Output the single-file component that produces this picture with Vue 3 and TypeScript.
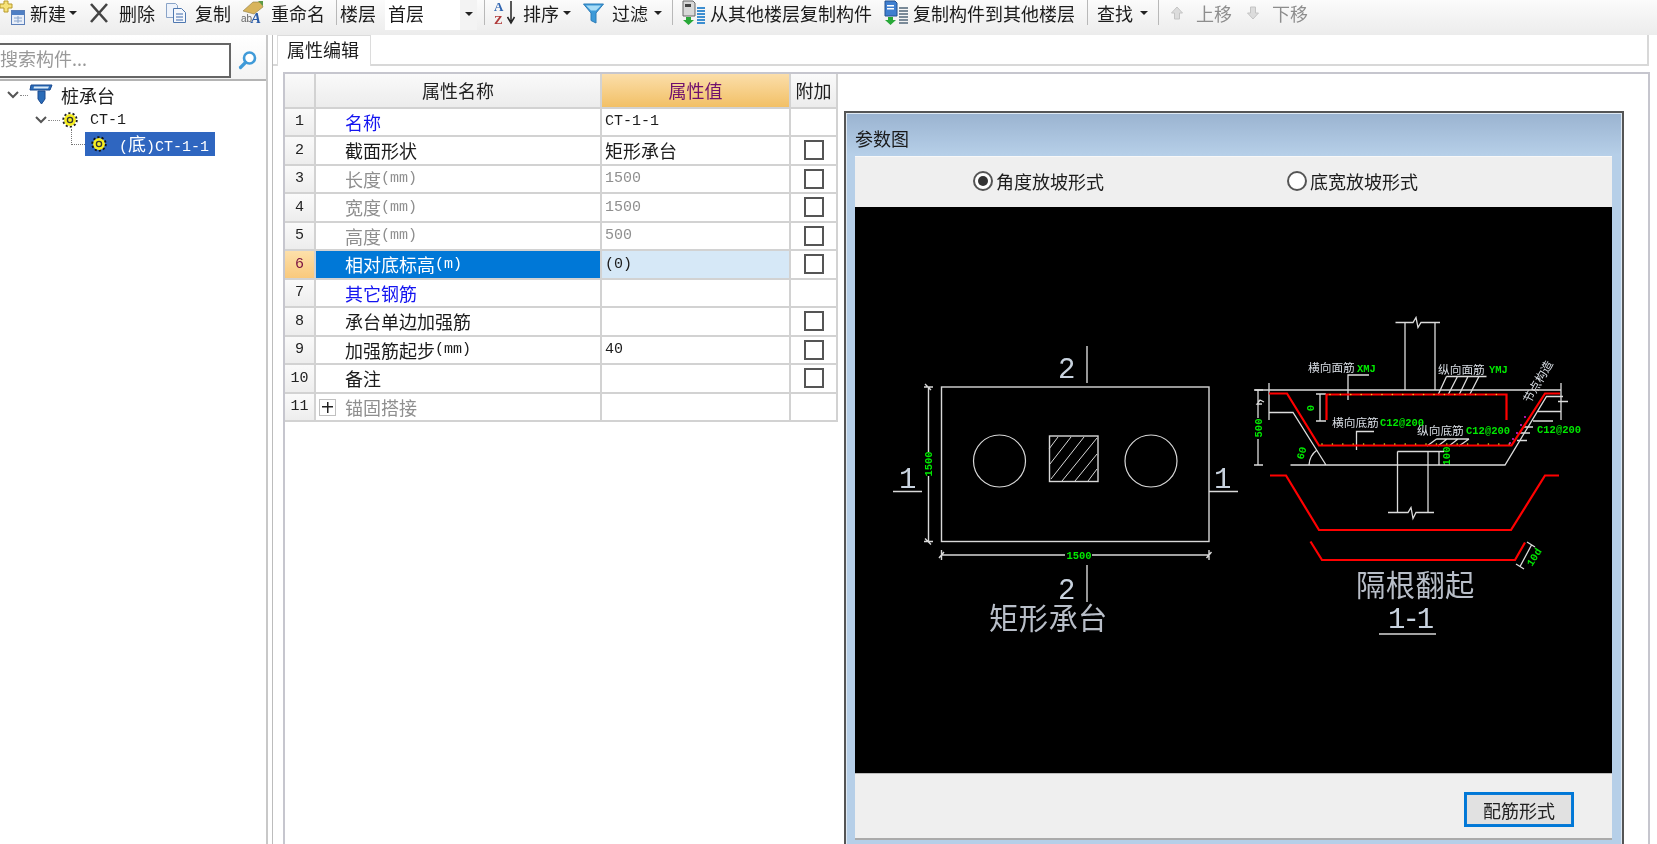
<script setup lang="ts">
interface Row {
  no: number
  name: string
  unit?: string
  value?: string
  mono?: boolean
  kind?: 'link' | 'muted' | 'active'
  check?: boolean
  expand?: boolean
}
const rows: Row[] = [
  { no: 1, name: '名称', value: 'CT-1-1', mono: true, kind: 'link' },
  { no: 2, name: '截面形状', value: '矩形承台', check: true },
  { no: 3, name: '长度', unit: '(mm)', value: '1500', mono: true, kind: 'muted', check: true },
  { no: 4, name: '宽度', unit: '(mm)', value: '1500', mono: true, kind: 'muted', check: true },
  { no: 5, name: '高度', unit: '(mm)', value: '500', mono: true, kind: 'muted', check: true },
  { no: 6, name: '相对底标高', unit: '(m)', value: '(0)', mono: true, kind: 'active', check: true },
  { no: 7, name: '其它钢筋', kind: 'link' },
  { no: 8, name: '承台单边加强筋', check: true },
  { no: 9, name: '加强筋起步', unit: '(mm)', value: '40', mono: true, check: true },
  { no: 10, name: '备注', check: true },
  { no: 11, name: '锚固搭接', kind: 'muted', expand: true },
]
const range = (from: number, to: number, step: number) => {
  const out: number[] = []
  for (let v = from; v <= to; v += step) out.push(v)
  return out
}
const topDots = range(1330, 1500, 10.4)
const bottomDots = range(1322, 1510, 10.4)
const hatch = [
  'M1049 449 L1058 437', 'M1050 464 L1071 437', 'M1051 479 L1084 437', 'M1062 481 L1097 438',
  'M1075 481 L1097 454', 'M1088 481 L1097 469',
]
const magenta = [[1525, 417], [1521, 425], [1517, 433], [1513, 439], [1510, 443]]
</script>

<template>
  <div class="app">
    <header class="toolbar">
      <div class="tool t-new">
        <svg width="25" height="26" viewBox="0 0 25 26"><path d="M4 1h4v3h4v4H8v4H4V8H0V4h4z" fill="#f6e27a" stroke="#b89a2a" /><rect x="11.5" y="10.5" width="13" height="14" fill="#e8eef8" stroke="#5b7fb8" /><rect x="12" y="11" width="12" height="4" fill="#4f7fc4" /><path d="M14 18h8M14 21h8M18 16v7" stroke="#88a4cc" /></svg>
        <span>新建</span><i class="caret" />
      </div>
      <div class="tool t-del">
        <svg width="18" height="22" viewBox="0 0 18 22"><path d="M1 2l16 18M17 2L1 20" stroke="#444" stroke-width="2.6" /></svg>
        <span>删除</span>
      </div>
      <div class="tool t-copy">
        <svg width="22" height="22" viewBox="0 0 22 22"><path d="M1.5 1.5h9l2 2v12h-11z" fill="#eef3fb" stroke="#8aa4c8" /><path d="M8.5 6.5h8l4 4v10h-12z" fill="#f4f7fc" stroke="#4f78b0" /><path d="M11 12h7M11 15h7M11 18h7" stroke="#3f6bac" /></svg>
        <span>复制</span>
      </div>
      <div class="tool t-ren">
        <svg width="23" height="26" viewBox="0 0 23 26"><path d="M2 11L12 2h8l2 5-9 7z" fill="#d8b45c" stroke="#8f7a40" stroke-width=".6" /><path d="M17 1h5v5z" fill="#5c9a46" /><text x="0" y="22" class="ico-ab">ab</text><text x="10" y="23" class="ico-a">A</text></svg>
        <span>重命名</span>
      </div>
      <i class="sep" />
      <span class="floor-label">楼层</span>
      <div class="combo"><span>首层</span><b class="combo-arrow"><i class="caret" /></b></div>
      <i class="sep s-combo" />
      <div class="tool t-sort">
        <svg width="23" height="26" viewBox="0 0 23 26"><text x="0" y="11" class="ico-az az-a">A</text><text x="0" y="24" class="ico-az az-z">Z</text><path d="M17 1v20M13.5 17l3.5 6 3.500-6" fill="none" stroke="#222" stroke-width="1.500" /></svg>
        <span>排序</span><i class="caret" />
      </div>
      <div class="tool t-filter">
        <svg width="21" height="22" viewBox="0 0 21 22"><path d="M.5 2h20l-7.500 9v10l-5-2.500V11z" fill="#3d9ad8" stroke="#2d7cb8" /><path d="M3 3.500h15l-5 5H8z" fill="#a8dcf6" /></svg>
        <span>过滤</span><i class="caret" />
      </div>
      <i class="sep" />
      <div class="tool t-from">
        <svg width="24" height="26" viewBox="0 0 24 26"><path d="M1 1h10l2 2v13H1z" fill="#d8d8d8" stroke="#666" /><path d="M3 4h6v3H3z" fill="#444" /><path d="M4 17h5v3h3l-5.500 5L1 20h3z" fill="#28a838" /><path d="M15 8h8M15 11h8M15 14h8M15 17h8M15 20h8M15 23h8" stroke="#3d8ed0" stroke-width="1.800" /></svg>
        <span>从其他楼层复制构件</span>
      </div>
      <div class="tool t-to">
        <svg width="25" height="26" viewBox="0 0 25 26"><path d="M1 1h10l2 2v13H1z" fill="#3f7fd0" stroke="#23508f" /><path d="M3 5h7v1.500H3zM3 8h7v1.500H3z" fill="#fff" /><path d="M4 17h5v3h3l-5.500 5L1 20h3z" fill="#28a838" /><path d="M15 8h9M15 11h9M15 14h9M15 17h9M15 20h9M15 23h9" stroke="#7a8a98" stroke-width="1.800" /></svg>
        <span>复制构件到其他楼层</span>
      </div>
      <i class="sep" />
      <div class="tool t-find"><span>查找</span><i class="caret" /></div>
      <i class="sep" />
      <div class="tool off t-up">
        <svg width="12" height="14" viewBox="0 0 12 14"><path d="M6 1l5.500 6H8.500v6h-5V7H.500z" fill="#dcdcdc" stroke="#c4c4c4" /></svg>
        <span>上移</span>
      </div>
      <div class="tool off t-down">
        <svg width="12" height="14" viewBox="0 0 12 14"><path d="M6 13L.500 7H3.500V1h5v6h3z" fill="#dcdcdc" stroke="#c4c4c4" /></svg>
        <span>下移</span>
      </div>
    </header>

    <main class="main">
      <aside class="left">
        <div class="search">
          <div class="search-box">搜索构件...</div>
          <svg class="search-icon" width="20" height="20" viewBox="0 0 20 20"><circle cx="11.500" cy="8" r="5.500" fill="#fff" stroke="#3f9ad8" stroke-width="2.600" /><path d="M7.500 12.500L2.500 17.500" stroke="#3f9ad8" stroke-width="3.200" stroke-linecap="round" /></svg>
        </div>
        <div class="tree">
          <div class="node n1">
            <svg width="12" height="8" viewBox="0 0 12 8"><path d="M1 1l5 5 5-5" fill="none" stroke="#555" stroke-width="2" /></svg>
            <i class="dots" />
            <svg class="pile" width="25" height="24" viewBox="0 0 25 24"><path d="M2 2h21l-2 5H1z" fill="#2a6cb8" stroke="#1a4a90" /><path d="M5 3.500h15l-1 2H4.500z" fill="#dcebf8" /><path d="M9 8h7v8l-3.500 5L9 16z" fill="#2a6cb8" stroke="#1a4a90" /></svg>
            <span class="node-text">桩承台</span>
          </div>
          <div class="node n2">
            <svg width="12" height="8" viewBox="0 0 12 8"><path d="M1 1l5 5 5-5" fill="none" stroke="#555" stroke-width="2" /></svg>
            <i class="dots d2" />
            <svg width="16" height="16" viewBox="0 0 16 16"><circle cx="8" cy="8" r="6" fill="#f6ee20" /><circle cx="8" cy="8" r="6.800" fill="none" stroke="#222" stroke-width="1.800" stroke-dasharray="2.200 2.100" /><circle cx="8" cy="8" r="2.600" fill="#f6ee20" stroke="#333" stroke-width="1.300" /></svg>
            <span class="mono node-code">CT-1</span>
          </div>
          <div class="node n3">
            <i class="elbow" />
            <div class="selected">
              <svg width="16" height="16" viewBox="0 0 16 16"><circle cx="8" cy="8" r="6" fill="#f6ee20" /><circle cx="8" cy="8" r="6.800" fill="none" stroke="#111" stroke-width="1.800" stroke-dasharray="2.200 2.100" /><circle cx="8" cy="8" r="2.600" fill="#f6ee20" stroke="#333" stroke-width="1.300" /></svg>
              <span class="sel-text"><span class="mono">(</span>底<span class="mono">)CT-1-1</span></span>
            </div>
          </div>
        </div>
      </aside>

      <section class="right">
        <div class="tabs"><div class="tab">属性编辑</div></div>
        <div class="panel">
          <div class="grid">
            <div class="grow head">
              <div class="c0" />
              <div class="c1 centered">属性名称</div>
              <div class="c2 centered hot">属性值</div>
              <div class="c3 centered">附加</div>
            </div>
            <div v-for="r in rows" :key="r.no" class="grow" :class="r.kind">
              <div class="c0 num mono">{{ r.no }}</div>
              <div class="c1 name">
                <i v-if="r.expand" class="plus" />
                <span>{{ r.name }}</span><span v-if="r.unit" class="mono unit">{{ r.unit }}</span>
              </div>
              <div class="c2 val" :class="{ mono: r.mono }">{{ r.value }}</div>
              <div class="c3 chk"><i v-if="r.check" class="box" /></div>
            </div>
          </div>

          <div class="dialog">
            <div class="dlg-title">参数图</div>
            <div class="dlg-body">
              <div class="radios">
                <label class="radio r1"><i class="dot on" />角度放坡形式</label>
                <label class="radio"><i class="dot" />底宽放坡形式</label>
              </div>
              <svg class="drawing" width="757" height="566" viewBox="855 207 757 566">
                <g fill="none" stroke="#d8d8d8" stroke-width="1.400">
                  <rect x="941.500" y="387" width="267.500" height="154.500" />
                  <path d="M1087 346V383M1087 565V602M893 491.500H922M1209 491.500H1238" />
                  <circle cx="999.500" cy="461" r="26" stroke-width="1.200" />
                  <circle cx="1151" cy="461" r="26" stroke-width="1.200" />
                  <rect x="1049.500" y="436" width="48.500" height="45.500" />
                  <path v-for="h in hatch" :key="h" :d="h" stroke-width="1" />
                  <path d="M928.500 387V452M928.500 476V541.500M924 387H933M924 541.500H933M925 384l6 6M925 538.500l6 6" />
                  <path d="M941.500 555H1065M1092 555H1209M941.500 550V560M1209 550V560M939 558l5-6M1206.500 558l5-6" />
                  <path d="M1379 634H1436" />
                </g>
                <g class="big-num">
                  <text x="1058" y="378">2</text>
                  <text x="1058" y="599">2</text>
                  <text x="899" y="488">1</text>
                  <text x="1214" y="488">1</text>
                  <text x="1388" y="628" class="tight">1-1</text>
                </g>
                <text x="989" y="629" class="cad-title">矩形承台</text>
                <text x="1356" y="596" class="cad-title">隔根翻起</text>

                <g class="dim">
                  <text x="1079" y="559" text-anchor="middle">1500</text>
                  <text transform="translate(932 464) rotate(-90)" text-anchor="middle">1500</text>
                  <text transform="translate(1261.500 428) rotate(-90)" text-anchor="middle">500</text>
                  <text transform="translate(1314 408) rotate(-90)" text-anchor="middle">0</text>
                  <text transform="translate(1450 456) rotate(-90)" text-anchor="middle">100</text>
                  <text transform="translate(1305 454) rotate(-75)" text-anchor="middle">60</text>
                  <text transform="translate(1537 559) rotate(-58)" text-anchor="middle">10d</text>
                  <text x="1357" y="372">XMJ</text>
                  <text x="1489" y="373">YMJ</text>
                  <text x="1380" y="426">C12@200</text>
                  <text x="1466" y="434">C12@200</text>
                  <text x="1537" y="433">C12@200</text>
                </g>
                <g class="note">
                  <text x="1308" y="372">横向面筋</text>
                  <text x="1438" y="374">纵向面筋</text>
                  <text x="1332" y="427">横向底筋</text>
                  <text x="1417" y="435">纵向底筋</text>
                  <text transform="translate(1530 404) rotate(-60)">节点构造</text>
                </g>

                <g fill="none" stroke="#dcdcdc" stroke-width="1.300">
                  <path d="M1395.500 322.500H1413l3-5 2 10 3-5H1440M1405 322.500V390M1435 322.500V390" />
                  <path d="M1255 390H1561M1269 383V420M1561 383V420M1269 412.500H1293L1326 465M1290.500 465H1505L1546.500 396.500H1563" />
                  <path d="M1258 390V418M1258 439V465M1254 390H1263M1254 465H1263M1264 402l-4-2-3 4h5" />
                  <path d="M1320 394V421M1316 394H1326M1316 421H1326" />
                  <path d="M1309 465a20 20 0 0 1 8-15M1397.500 451.500H1443M1397.500 451.500V512.500M1428 451.500V512.500M1439 451.500V465M1435 451.500H1444" />
                  <path d="M1388 512.500H1408l3-5 2 11 3-6H1434" />
                  <path d="M1348 400V375H1369M1446.500 376.500H1486.500M1446.500 376.500L1438 395M1457.500 376.500L1448 395M1468 376.500L1459 395M1479 376.500L1469.500 395" />
                  <path d="M1356.500 450V431.500H1374M1436.500 439H1469M1436.500 439L1427 446M1447 439L1438 446M1458 439L1449 446M1469 439L1459 446" />
                  <path d="M1538 411.500H1561M1533 421H1553M1523 427H1533M1520 433H1530M1517 440.500H1527M1558 401.500H1568M1531.500 545L1520 566.500M1527 542l8 5M1516 564l8 5" />
                </g>

                <g fill="none" stroke="#ff0000" stroke-width="2.200">
                  <path d="M1269 393.500H1287L1319 445.500H1511.500L1545 393.500H1560" />
                  <path d="M1506.500 420V394.500H1326.500V420" />
                  <path d="M1270 475.500H1286L1319 530H1511L1545 475.500H1559" />
                  <path d="M1310.500 541.500L1322 560H1515L1525 542.500" />
                </g>
                <circle v-for="x in topDots" :key="'t' + x" :cx="x" cy="394.500" r=".8" fill="#e8d020" />
                <circle v-for="x in bottomDots" :key="'b' + x" :cx="x" cy="444" r=".8" fill="#e8d020" />
                <circle v-for="m in magenta" :key="m[0]" :cx="m[0]" :cy="m[1]" r=".9" fill="#f020f0" />
              </svg>
              <div class="dlg-foot"><button class="btn" type="button">配筋形式</button></div>
            </div>
          </div>
        </div>
      </section>
    </main>
  </div>
</template>

<style>
html, body { margin: 0; overflow: hidden; background: #fff; }
</style>

<style scoped>
.app {
  width: 1657px;
  height: 844px;
  overflow: hidden;
  background: #fff;
  color: #1c1c1c;
  font: 18px/1 "Noto Sans CJK SC", "Liberation Sans", sans-serif;
  filter: blur(0.35px);
}
.mono { font-family: "Liberation Mono", "Noto Sans CJK SC", monospace; font-size: 15px; }

.toolbar {
  display: flex;
  align-items: center;
  gap: 10px;
  height: 35px;
  box-sizing: border-box;
  padding-bottom: 10px;
  background: linear-gradient(#fbfbfb, #ececec);
  white-space: nowrap;
  overflow: hidden;
}
.tool { display: flex; align-items: center; gap: 6px; flex: none; }
.tool svg { flex: none; }
.off { color: #8d8d8d; }
.caret {
  display: block;
  flex: none;
  width: 0;
  height: 0;
  margin-left: -2px;
  border: 4px solid transparent;
  border-top: 4px solid #222;
  border-bottom: 0;
}
.t-new { gap: 5px; margin-right: 3px; }
.t-del { gap: 11px; }
.t-copy { gap: 8px; }
.t-ren { gap: 7px; }
.t-ren + .sep { margin-left: 1px; }
.t-sort { margin-right: 2px; }
.t-filter { gap: 8px; }
.t-from { gap: 4px; margin-right: 2px; }
.t-to { gap: 4px; margin-right: 2px; }
.t-find .caret { margin-left: 1px; }
.t-up { gap: 13px; margin-left: 3px; margin-right: 5px; }
.t-down { gap: 13px; }
.sep { flex: none; width: 1px; height: 25px; background: #b8b8b8; margin: 0 -1px 0 0; }
.floor-label { margin-left: -6px; }
.combo {
  display: flex;
  align-items: center;
  justify-content: space-between;
  width: 92px;
  height: 30px;
  margin-left: -1px;
  margin-top: 5px;
  padding-left: 3px;
  box-sizing: border-box;
  background: #fff;
}
.combo span { margin-top: -5px; }
.combo-arrow { display: flex; align-items: center; justify-content: center; width: 17px; height: 30px; background: #f3f3f3; }
.combo-arrow .caret { margin: -3px 0 0; }
.s-combo { margin-left: -3px; }

.main { display: flex; height: 809px; }
.left { flex: none; width: 268px; box-sizing: border-box; border-right: 2px solid #c8c8c8; }
.search {
  display: flex;
  align-items: center;
  height: 46px;
  box-sizing: border-box;
  border-bottom: 2px solid #b4b4b4;
  padding-bottom: 2px;
  padding-top: 8px;
  background: linear-gradient(#fff, #f4f4f4);
}
.search-box {
  width: 233px;
  height: 35px;
  margin-left: -2px;
  box-sizing: border-box;
  flex: none;
  display: flex;
  align-items: center;
  padding-bottom: 4px;
  background: #fff;
  border: 2px solid #666;
  color: #999;
}
.search-icon { margin-left: 7px; flex: none; }
.tree { background: #fff; }
.node { display: flex; align-items: center; position: relative; }
.n1 { height: 26px; margin-top: 1px; padding-left: 7px; }
.n2 { height: 24px; padding-left: 35px; }
.n3 { height: 24px; padding-left: 85px; }
.dots { width: 8px; height: 0; margin: 0 1px; border-top: 1px dotted #888; }
.d2 { width: 12px; margin-right: 2px; }
.pile { margin-right: 7px; }
.node-text { font-size: 18px; }
.node-code { margin-left: 12px; }
.elbow {
  position: absolute;
  left: 71px;
  top: -3px;
  width: 13px;
  height: 15px;
  border-left: 1px dotted #777;
  border-bottom: 1px dotted #777;
}
.selected {
  display: flex;
  align-items: center;
  width: 130px;
  height: 24px;
  padding-left: 6px;
  box-sizing: border-box;
  background: #2f66c0;
  color: #fff;
}
.sel-text { margin-left: 12px; white-space: nowrap; font-size: 18px; }
.sel-text .mono { font-size: 15px; }

.right {
  flex: none;
  width: 1380px;
  margin-left: 4px;
  border-left: 1px solid #bcbcbc;
  box-sizing: border-box;
}
.tabs {
  height: 31px;
  box-sizing: border-box;
  border-bottom: 2px solid #d8d8d8;
  border-right: 2px solid #d8d8d8;
  padding-left: 4px;
  margin-right: 3px;
}
.tab {
  width: 94px;
  height: 31px;
  box-sizing: border-box;
  padding-top: 1px;
  padding-left: 9px;
  line-height: 24px;
  background: #fff;
  border: 1px solid #dcdcdc;
  border-bottom: 0;
}
.panel {
  display: flex;
  align-items: flex-start;
  margin: 6px 0 0 10px;
  width: 1367px;
  height: 780px;
  box-sizing: border-box;
  border: 2px solid #c6c6ce;
  border-bottom: 0;
}
.grid { flex: none; width: 553px; }
.grow { display: flex; height: 28.500px; box-sizing: border-box; border-bottom: 2px solid #d2d2d2; }
.head { height: 34.500px; color: #222; }
.grow > div { display: flex; align-items: center; box-sizing: border-box; border-right: 2px solid #d2d2d2; }
.c0 { flex: none; width: 31px; background: linear-gradient(#fafafa, #ededed); justify-content: center; color: #222; }
.c1 { flex: none; width: 286px; }
.c2 { flex: none; width: 189px; }
.c3 { flex: none; width: 47px; }
.head > div { background: linear-gradient(#fafafa, #ececec); }
.centered { justify-content: center; }
.head > .hot { background: linear-gradient(#fbdeaa, #f2c066); color: #70106e; }
.num { font-size: 15px; }
.name { padding-left: 29px; position: relative; white-space: nowrap; }
.val { padding-left: 3px; white-space: nowrap; }
.chk { justify-content: center; }
.box { display: block; width: 20px; height: 20px; box-sizing: border-box; border: 2px solid #555; background: #fff; }
.link .name { color: #1414f0; }
.muted .name, .muted .val { color: #8f8f8f; }
.active .c0 { background: linear-gradient(#fde0aa, #f9c97c); color: #7a1040; }
.active .c1 { background: #0078d7; color: #fff; }
.active .c2 { background: #d6e8f7; }
.plus {
  position: absolute;
  left: 3px;
  top: 5px;
  width: 17px;
  height: 17px;
  box-sizing: border-box;
  border: 1px solid #c0c0c0;
  background:
    linear-gradient(#222, #222) center / 11px 1.500px no-repeat,
    linear-gradient(#222, #222) center / 1.500px 11px no-repeat,
    #fff;
}

.dialog {
  flex: none;
  width: 780px;
  height: 760px;
  margin: 37px 0 0 6px;
  box-sizing: border-box;
  border: 2px solid #555;
  border-bottom: 0;
  padding: 1px 9px 0 9px;
  background: linear-gradient(#9ab3d0, #b6cfe8 42px, #b6cfe8);
  box-shadow: inset 0 0 0 1px #dfe9f3;
}
.dlg-title { height: 42px; padding-top: 15px; box-sizing: border-box; line-height: 18px; color: #1a1a1a; }
.dlg-body { display: flex; flex-direction: column; width: 757px; }
.radios {
  display: flex;
  height: 51px;
  box-sizing: border-box;
  align-items: center;
  padding-left: 118px;
  padding-bottom: 2px;
  background: #efefef;
  border-top: 1px solid #f8f8f8;
}
.radio { display: flex; align-items: center; gap: 3px; }
.r1 { width: 314px; }
.dot { display: block; width: 20px; height: 20px; box-sizing: border-box; border: 2px solid #555; border-radius: 50%; background: #fff; position: relative; }
.on::after { content: ""; position: absolute; inset: 3px; border-radius: 50%; background: #333; }
.drawing { display: block; background: #000; flex: none; }
.dlg-foot {
  display: flex;
  justify-content: flex-end;
  height: 67px;
  padding: 18px 38px 0 0;
  box-sizing: border-box;
  background: #efefef;
  border-bottom: 2px solid #aaa;
  border-top: 1px solid #bbb;
}
.btn {
  width: 110px;
  height: 35px;
  padding: 0;
  background: #e1e1e1;
  border: 2px solid #0078d7;
  outline: 1px solid #0a7ad6;
  outline-offset: -3px;
  color: #222;
  font: inherit;
}
.big-num text { font: 29px "Liberation Mono", monospace; fill: #c8d2de; }
.cad-title { font: 29.300px "Noto Sans CJK SC", sans-serif; fill: #b8bec8; letter-spacing: .4px; }
.tight { letter-spacing: -3px; }
.dim text { font: 10.500px "Liberation Mono", monospace; fill: #00e800; font-weight: 700; }
.note text { font: 11.700px "Noto Sans CJK SC", sans-serif; fill: #d8dde4; }
.ico-ab { font: 10px "Liberation Sans", sans-serif; fill: #666; }
.ico-a { font: italic 700 15px "Liberation Serif", serif; fill: #2a5ca8; }
.ico-az { font: 700 13px "Liberation Serif", serif; }
.az-a { fill: #2f64b0; }
.az-z { fill: #b03a3a; }
</style>
